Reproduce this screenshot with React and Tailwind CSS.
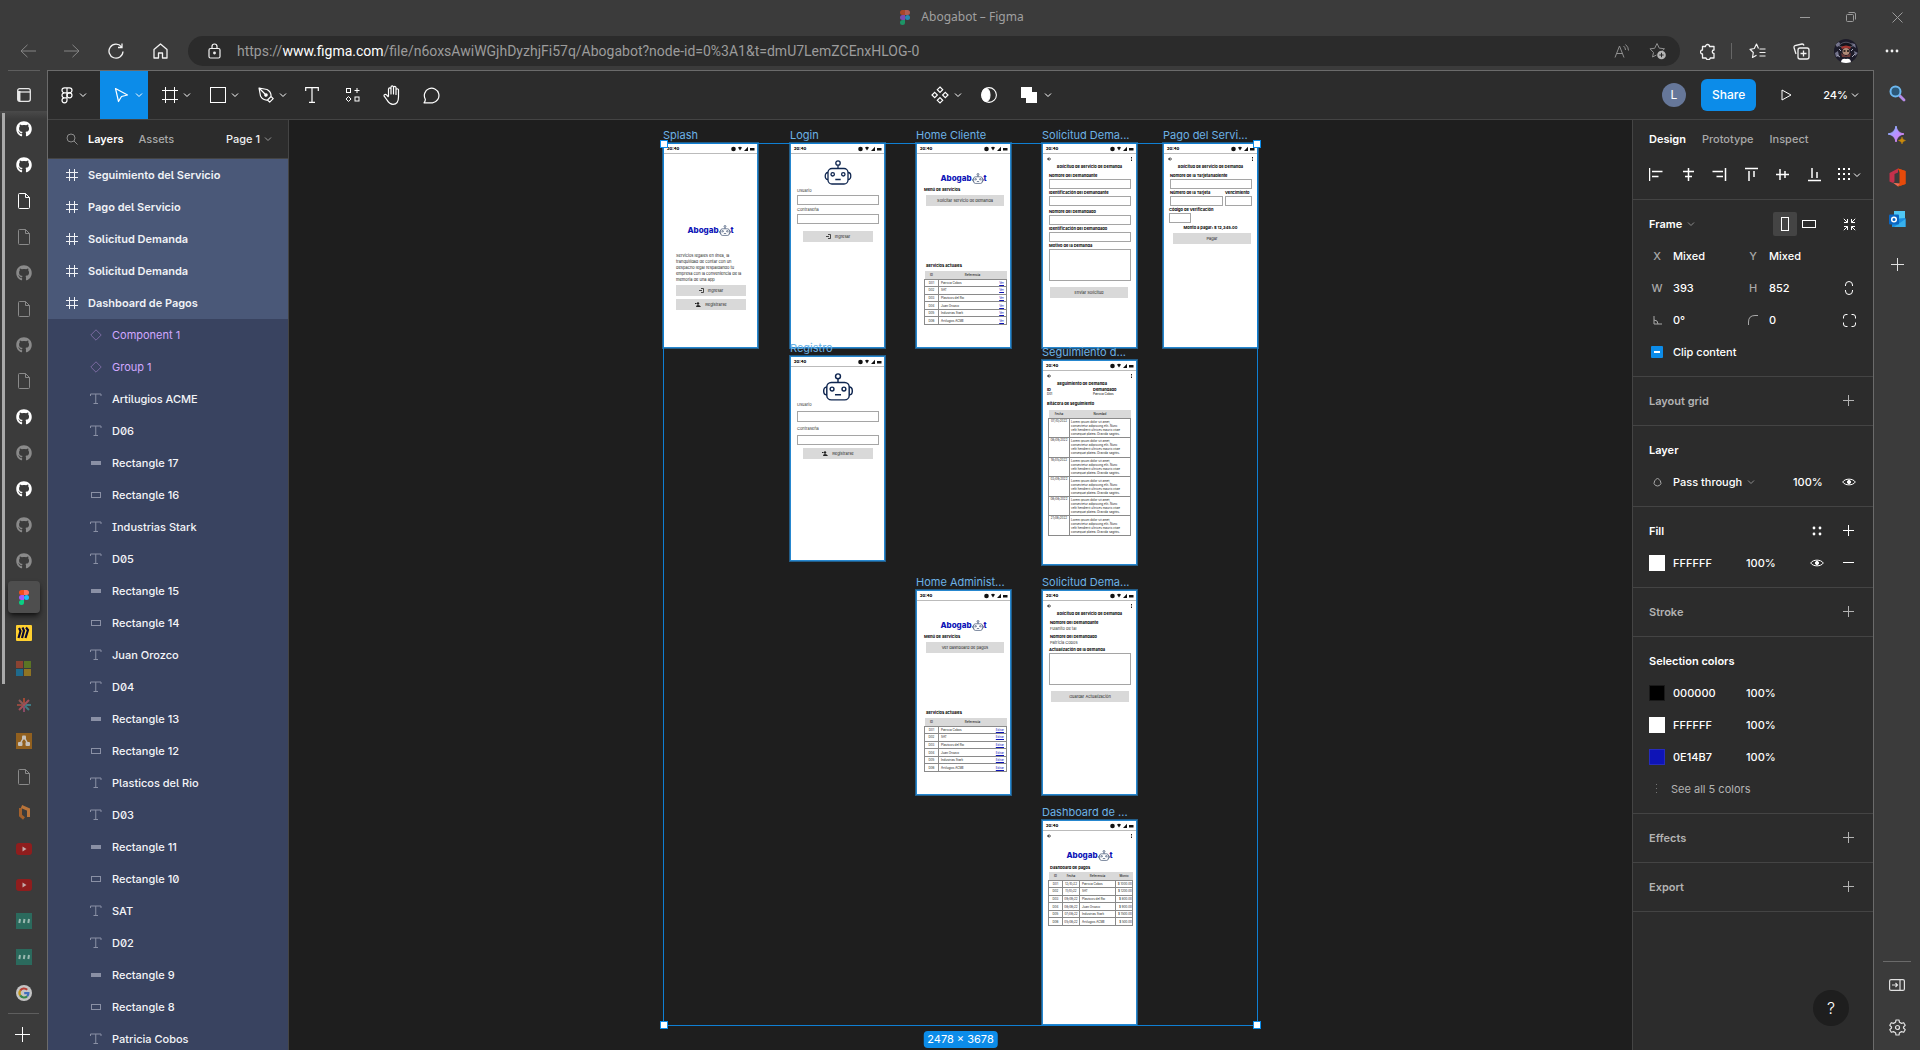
import React from "react";
import { FaGithub } from "react-icons/fa";

/* ---------- generic icon helpers ---------- */

function Svg({ w = 16, h = 16, sw = 1, className = "", children, fill = "none" }) {
  return (
    <svg width={w} height={h} viewBox={`0 0 ${w} ${h}`} fill={fill} stroke={fill === "none" ? "currentColor" : "none"} strokeWidth={sw} className={`shrink-0 ${className}`} aria-hidden="true">
      {children}
    </svg>
  );
}

const Chevron = ({ className = "" }) => (
  <Svg w={8} h={8} className={className}><path d="M1 2.5 4 5.5 7 2.5" /></Svg>
);
const Plus = ({ className = "" }) => (
  <Svg w={12} h={12} className={className}><path d="M5.5 0V11M0 5.5H11" /></Svg>
);
const FrameIcon = () => (
  <Svg w={12} h={12}><path d="M3.5 0V12M8.5 0V12M0 3.5H12M0 8.5H12" /></Svg>
);
const TextIcon = () => (
  <Svg w={12} h={12}><path d="M.5 3V1H11V3M5.75 1V10.5M3.5 10.5H8" /></Svg>
);
const Eye = () => (
  <Svg w={14} h={8}><path d="M.7 4C3 .2 11 .2 13.3 4 11 7.800 3 7.800 .7 4Z" /><circle cx="7" cy="4" r="1.6" fill="currentColor" /></Svg>
);

function FigmaLogo({ dim }) {
  return (
    <svg width="10" height="15" viewBox="0 0 10 15" className={dim ? "opacity-60" : ""} aria-hidden="true">
      <path d="M2.500 0H5V5H2.500A2.500 2.500 0 0 1 2.500 0Z" fill="#f24e1e" />
      <path d="M5 0H7.500A2.500 2.500 0 0 1 7.500 5H5Z" fill="#ff7262" />
      <path d="M2.500 5H5V10H2.500A2.500 2.500 0 0 1 2.500 5Z" fill="#a259ff" />
      <circle cx="7.500" cy="7.500" r="2.500" fill="#1abcfe" />
      <path d="M2.500 10H5V12.500A2.500 2.500 0 1 1 2.500 10Z" fill="#0acf83" />
    </svg>
  );
}

/* ---------- browser chrome ---------- */

function TitleBar() {
  return (
    <header className="grid h-[34px] shrink-0 grid-cols-[1fr_auto_1fr] items-center">
      <span />
      <div className="flex items-center gap-[11px] pl-1 text-[12px] text-[#a0a0a0] font-['Noto_Sans','Open_Sans',sans-serif]">
        <FigmaLogo dim />
        <span>Abogabot – Figma</span>
      </div>
      <div className="flex justify-end text-[#9b9b9b]">
        <button aria-label="Minimize" className="grid w-[46px] place-items-center"><Svg w={10} h={10}><path d="M0 5.500H10" /></Svg></button>
        <button aria-label="Restore" className="grid w-[46px] place-items-center"><Svg w={10} h={10}><rect x=".5" y="2.500" width="7" height="7" rx="1" /><path d="M2.500 .5H8A1.500 1.500 0 0 1 9.500 2V7.500" /></Svg></button>
        <button aria-label="Close" className="grid w-[46px] place-items-center"><Svg w={11} h={11}><path d="M.5 .5 10.500 10.500M10.500 .5 .5 10.500" /></Svg></button>
      </div>
    </header>
  );
}

const navBtn = "grid w-11 h-[30px] shrink-0 place-items-center";
const wideBtn = "grid w-[46px] h-[30px] shrink-0 place-items-center";

function PirateAvatar() {
  return (
    <svg width="24" height="24" viewBox="0 0 24 24" aria-hidden="true">
      <defs><clipPath id="avatar-clip"><circle cx="12" cy="12" r="12" /></clipPath></defs>
      <g clipPath="url(#avatar-clip)">
        <rect width="24" height="24" fill="#1d1c2a" />
        <path d="M1 5 5 3 7 6 3 8ZM17 4 21 5 22 9 19 7ZM1 14 4 12 5 17 2 18ZM20 12 24 14 21 17Z" fill="#74748c" />
        <path d="M5 7C8 2 16 2 19 7L12 9Z" fill="#14141d" stroke="#8d8da0" strokeWidth=".5" />
        <path d="M7 8Q12 5 17 8L16 10Q12 8 8 10Z" fill="#a33530" />
        <circle cx="12" cy="12.500" r="3.500" fill="#b08a78" />
        <path d="M9.500 12H11.500M13 12H15" stroke="#111" strokeWidth="1.600" />
        <path d="M7 14 12 17 17 14 16 18 8 18Z" fill="#6b3a3a" />
        <path d="M3 16 6 18M21 15 18 18M5 10 7 12M19 10 17 12" stroke="#a6a6b8" />
        <path d="M7 24Q7 19 12 20 17 19 17 24Z" fill="#fff" />
      </g>
    </svg>
  );
}

function AddressBar() {
  return (
    <nav className="mt-[2px] flex h-[34px] shrink-0 items-start pl-[6px] pr-[5px] text-[#f2f2f2]">
      <button aria-label="Back" className={`${navBtn} text-[#858585]`}><Svg w={16} h={14}><path d="M16 7H1M7.500 .8 1 7 7.500 13.200" /></Svg></button>
      <button aria-label="Forward" className={`${navBtn} text-[#858585]`}><Svg w={16} h={14}><path d="M0 7H15M8.500 .8 15 7 8.500 13.200" /></Svg></button>
      <button aria-label="Refresh" className={navBtn}><Svg w={16} h={16} sw={1.3}><path d="M15 8.500A7 7 0 1 1 13.500 3.800M14 .5V4.500H10" /></Svg></button>
      <button aria-label="Home" className={navBtn}><Svg w={15} h={16} sw={1.3}><path d="M1 6.500 7.500 1 14 6.500V15H9.500V10H5.500V15H1Z" strokeLinejoin="round" /></Svg></button>
      <div className="ml-[6px] flex h-[30px] flex-1 items-center rounded-full bg-[#2b2b2b] pl-5 pr-1">
        <Svg w={13} h={16} sw={1.2}><rect x="1" y="5.500" width="11" height="9.500" rx="1.500" /><path d="M4 5.500V3.500A2.500 2.500 0 0 1 9 3.500V5.500" /><circle cx="6.500" cy="10" r=".8" fill="currentColor" /></Svg>
        <div role="textbox" aria-label="Address" className="ml-4 flex-1 whitespace-nowrap text-[14px] text-[#9c9c9c] font-['Roboto','Noto_Sans',sans-serif]">
          https://<span className="text-white">www.figma.com</span>/file/n6oxsAwiWGjhDyzhjFi57q/Abogabot?node-id=0%3A1&amp;t=dmU7LemZCEnxHLOG-0
        </div>
        <button aria-label="Read aloud" className="grid w-9 place-items-center text-[#8f8f8f]"><Svg w={17} h={16}><path d="M1 14.500 5.500 3 10 14.500M2.700 10.500H8.400M9.500 3Q11.500 4.500 11.500 7M11.500 1.500Q14.500 4 14.500 7.500" /></Svg></button>
        <button aria-label="Add to favorites" className="grid w-9 place-items-center text-[#8f8f8f]">
          <Svg w={18} h={18}><path d="M12 6.300 15.500 6.800 13.500 8.500M7.500 13 3.500 15 4.500 10.500 1 6.800 5.700 6.300 8 1.500 10.300 6.200 12 6.300" strokeLinejoin="round" /><circle cx="12.500" cy="13" r="4.300" fill="#b5b5b5" stroke="none" /><path d="M12.500 10.800V15.200M10.300 13H14.700" stroke="#2b2b2b" /></Svg>
        </button>
      </div>
      <button aria-label="Extensions" className="ml-3 grid h-[30px] w-8 shrink-0 place-items-center"><Svg w={16} h={17} sw={1.3}><path d="M2.500 3.500H5.500A2 2 0 1 1 9.500 3.500H14V7A1.600 1.600 0 1 0 14 10.500V15H10.300A2.200 2.200 0 0 1 6 15H2.500V11A2 2 0 1 1 2.500 7Z" strokeLinejoin="round" /></Svg></button>
      <span className="ml-[7px] mt-[7px] h-4 w-px shrink-0 bg-[#666]" />
      <button aria-label="Favorites" className={`${navBtn} ml-[3px]`}><Svg w={17} h={16} sw={1.2}><path d="M9.500 5.500 7.500 1 5.300 5.500 1 6.300 4.300 9.500 3.500 14.500 7.500 12.300M10.500 6H16.500M10.500 9.500H16.500M10.500 13H16.500" strokeLinejoin="round" /></Svg></button>
      <button aria-label="Collections" className={navBtn}><Svg w={17} h={17} sw={1.3}><rect x="5" y="5" width="11" height="11" rx="2" /><path d="M10.500 7.500V13.500M7.500 10.500H13.500M3 11 1 4.500Q.8 3 2 2.500L9 1Q10.500 .8 11 2.500" /></Svg></button>
      <button aria-label="Profile" className={wideBtn}><PirateAvatar /></button>
      <button aria-label="Settings and more" className={wideBtn}><Svg w={14} h={4} fill="currentColor"><circle cx="2" cy="2" r="1.400" /><circle cx="7" cy="2" r="1.400" /><circle cx="12" cy="2" r="1.400" /></Svg></button>
    </nav>
  );
}

/* ---------- vertical tabs ---------- */

const FileTab = ({ dim }) => (
  <Svg w={12} h={16} className={dim ? "text-[#8a8a8a]" : "text-white"}><path d="M1.500 .5H7.500L11.500 4.500V14.500Q11.500 15.500 10.500 15.500H1.500Q.5 15.500 .5 14.500V1.500Q.5 .5 1.500 .5ZM7.500 .5V4.500H11.500" /></Svg>
);
const Gh = ({ dim }) => <FaGithub size={16} className={dim ? "text-[#8a8a8a]" : "text-white"} aria-hidden="true" />;
const Miro = () => (
  <Svg w={16} h={16} fill="#ffd02f"><rect width="16" height="16" rx="1" fill="#ffd02f" /><path d="M3 3 4.500 6 2.500 13M6.500 2.500 8 5.500 6 13M10 2.500 12 5 9.500 13" stroke="#0b0933" strokeWidth="2.200" fill="none" /></Svg>
);
const Windows = () => (
  <Svg w={16} h={16} fill="#000"><path d="M0 0H7V7H0Z" fill="#8b4332" /><path d="M8 0H15V7H8Z" fill="#5b7524" /><path d="M0 8H7V15H0Z" fill="#1f6a8c" /><path d="M8 8H15V15H8Z" fill="#8f7423" /></Svg>
);
const Asterisk = () => (
  <Svg w={16} h={16} sw={2}><path d="M8 1V6" stroke="#a04a35" /><path d="M8 10V15" stroke="#8b4a66" /><path d="M1 8H6" stroke="#93493f" /><path d="M10 8H15" stroke="#3f7a82" /><path d="M3 3 8 8" stroke="#8c5a58" /><path d="M8 8 13 13" stroke="#3f7a82" /><path d="M13 3 3 13" stroke="#a0505a" /></Svg>
);
const Diagram = () => (
  <Svg w={16} h={16} fill="#000"><rect width="16" height="16" fill="#91601f" /><path d="M8 4 4 11M8 4 12 11" stroke="#c4c0ba" strokeWidth="1.500" /><rect x="6" y="2.500" width="4" height="4" rx="1" fill="#c4c0ba" /><rect x="2" y="9" width="4.500" height="4" rx="1" fill="#c4c0ba" /><rect x="9.500" y="9" width="4.500" height="4" rx="1" fill="#c4c0ba" /></Svg>
);
const Hex = () => (
  <Svg w={16} h={16} sw={3}><path d="M4.500 3V10.500L8 13.500" stroke="#a3602b" /><path d="M5.500 1.500 12.500 4.500V12" stroke="#b9743a" /></Svg>
);
const Youtube = () => (
  <Svg w={16} h={12} fill="#8f1d1d"><rect width="16" height="12" rx="3" /><path d="M6.500 3.500 10.500 6 6.500 8.500Z" fill="#c3a9a9" /></Svg>
);
const Teal = () => (
  <Svg w={16} h={16} fill="#2b6a5d"><rect width="16" height="16" /><path d="M4 6 3.300 10M8.500 6 7.800 10M13 6 12.300 10" stroke="#9bb8b0" strokeWidth="2" /></Svg>
);
const Google = () => (
  <Svg w={16} h={16} sw={2.2} className="opacity-70"><circle cx="8" cy="8" r="8" fill="#fff" stroke="none" /><path d="M11.200 4.800A4.500 4.500 0 0 0 4.200 5.600" stroke="#ea4335" /><path d="M4.200 5.600A4.500 4.500 0 0 0 4.200 10.400" stroke="#fbbc05" /><path d="M4.200 10.400A4.500 4.500 0 0 0 11.200 11.200" stroke="#34a853" /><path d="M11.200 11.200Q12.500 10 12.400 8.100H8.200" stroke="#4285f4" /></Svg>
);

const tabs = [
  ["GitHub", <Gh />], ["GitHub", <Gh />], ["Document", <FileTab />], ["Document", <FileTab dim />],
  ["GitHub", <Gh dim />], ["Document", <FileTab dim />], ["GitHub", <Gh dim />], ["Document", <FileTab dim />],
  ["GitHub", <Gh />], ["GitHub", <Gh dim />], ["GitHub", <Gh />], ["GitHub", <Gh dim />], ["GitHub", <Gh dim />],
  ["Figma", <FigmaLogo />, true], ["Miro", <Miro />], ["Microsoft", <Windows />], ["Asterisk", <Asterisk />],
  ["Diagrams", <Diagram />], ["Document", <FileTab dim />], ["Hexagon", <Hex />], ["YouTube", <Youtube />],
  ["YouTube", <Youtube />], ["Notes", <Teal />], ["Notes", <Teal />], ["Google", <Google />],
];

function TabStrip() {
  return (
    <aside className="flex w-[47px] shrink-0 flex-col items-center">
      <span className="h-px w-8 shrink-0 bg-[#5e5e5e]" />
      <button aria-label="Tab actions" className="grid h-10 w-8 shrink-0 place-items-center pt-2 text-[#e8e8e8]">
        <Svg w={14} h={14} sw={1.3}><rect x=".7" y=".7" width="12.600" height="12.600" rx="2" /><path d="M.7 4H13.300" /><path d="M2.200 3V13" strokeWidth="2.500" /></Svg>
      </button>
      <div className="relative flex w-full flex-1 flex-col bg-linear-to-b from-[#4a4a4a] to-[#3b3b3b] to-[8px]">
        <span className="absolute left-[2px] top-[2px] h-[571px] w-[3px] bg-[#a9a9a9]" />
        {tabs.map(([name, icon, active], i) => (
          <button key={i} aria-label={name} className="grid h-9 place-items-center">
            <span className={active ? "grid h-8 w-8 place-items-center rounded bg-[#4e4e4e] shadow-md shadow-black/60" : "grid place-items-center"}>{icon}</span>
          </button>
        ))}
        <span className="mx-2 mt-[2px] h-px bg-[#5e5e5e]" />
        <button aria-label="New tab" className="grid h-10 place-items-center pr-[2px] text-white"><Svg w={15} h={15}><path d="M7.500 0V15M0 7.500H15" /></Svg></button>
      </div>
    </aside>
  );
}

/* ---------- Figma toolbar ---------- */

const tool = "flex h-12 w-12 shrink-0 items-center justify-between pl-[14px] pr-[5px]";
const soloTool = "grid h-12 w-10 shrink-0 place-items-center";

function Toolbar() {
  return (
    <div className="flex h-[49px] shrink-0 items-center border-b border-[#444] text-white">
      <div className="flex flex-1">
        <button aria-label="Main menu" className="flex h-12 w-[52px] items-center gap-[6px] pl-[13px]">
          <Svg w={12} h={17} sw={1.2}><path d="M6 .8H3.500A2.500 2.500 0 0 0 3.500 5.800H6ZM6 .8H8.500A2.500 2.500 0 0 1 8.500 5.800H6ZM6 5.800H3.500A2.500 2.500 0 0 0 3.500 10.800H6ZM3.500 10.800A2.500 2.500 0 1 0 6 13.300V10.800Z" /><circle cx="8.500" cy="8.300" r="2.500" /></Svg>
          <Chevron />
        </button>
        <button aria-label="Move" className={`${tool} bg-[#0c8ce9]`}><Svg w={15} h={16} sw={1.2}><path d="M1.500 1.500 13.500 8 7.500 9.500 4.500 14.500Z" strokeLinejoin="round" /></Svg><Chevron /></button>
        <button aria-label="Frame" className={tool}><Svg><path d="M3.500 0V16M12.500 0V16M0 3.500H16M0 12.500H16" /></Svg><Chevron /></button>
        <button aria-label="Rectangle" className={tool}><Svg><rect x=".5" y=".5" width="15" height="15" /></Svg><Chevron /></button>
        <button aria-label="Pen" className={tool}><Svg sw={1.2}><path d="M1 1 9 2.500Q13.500 5 13 9.500L9.500 13Q5 13.500 2.500 9ZM1 1 7 7M13 9.500 15.200 11.700 11.700 15.200 9.500 13" strokeLinejoin="round" /><circle cx="8" cy="8" r="1.200" fill="currentColor" /></Svg><Chevron /></button>
        <button aria-label="Text" className={soloTool}><Svg w={14} h={16} sw={1.2}><path d="M.7 4V.7H13.300V4M7 .7V15.300M4 15.300H10" /></Svg></button>
        <button aria-label="Resources" className={soloTool}><Svg><rect x="2.500" y="1.500" width="4" height="4" /><path d="M13 1V6M10.500 3.500H15.500M4.500 9.500 7 12 4.500 14.500 2 12Z" /><rect x="11" y="10" width="4" height="4" /></Svg></button>
        <button aria-label="Hand tool" className={soloTool}><Svg w={18} h={20} sw={1.2}><path d="M5.500 11.500V4.200a1.250 1.250 0 0 1 2.500 0V9V2.200a1.250 1.250 0 0 1 2.500 0V9V2.700a1.250 1.250 0 0 1 2.500 0V9.500V5a1.250 1.250 0 0 1 2.500 0V12C15.500 17 13.500 19.300 10 19.300 6.500 19.300 5.500 17.500 4 15L1 10.800C.8 9.500 2.500 8.800 3.500 9.800L5.500 12" strokeLinejoin="round" /></Svg></button>
        <button aria-label="Comment" className={soloTool}><Svg w={18} h={17} sw={1.2}><path d="M1 15.800Q2.500 14 2.300 12.200A7.300 7.300 0 1 1 9.500 15.800Z" strokeLinejoin="round" /></Svg></button>
      </div>
      <div className="flex pl-[70px]">
        <button aria-label="Create component" className="flex h-12 w-12 items-center gap-[5px] pl-[10px]"><Svg w={18} h={18} sw={1.2}><path d="M9 1 11.700 3.700 9 6.400 6.300 3.700ZM3.700 6.300 6.400 9 3.700 11.700 1 9ZM14.300 6.300 17 9 14.300 11.700 11.600 9ZM9 11.600 11.700 14.300 9 17 6.300 14.300Z" /></Svg><Chevron /></button>
        <button aria-label="Use as mask" className={soloTool}><Svg sw={1.1}><circle cx="8" cy="8" r="7.400" /><ellipse cx="5" cy="8" rx="4" ry="6.500" fill="currentColor" /></Svg></button>
        <button aria-label="Union selection" className="flex h-12 w-12 items-center justify-between pl-3 pr-[5px]"><Svg fill="currentColor"><path d="M0 0H11V5H16V16H5V11H0Z" /></Svg><Chevron /></button>
      </div>
      <div className="flex flex-1 items-center justify-end pr-[14px] text-[12px] font-medium">
        <span className="grid h-6 w-6 place-items-center rounded-full bg-[#667799] font-normal">L</span>
        <button className="ml-[15px] h-8 rounded-md bg-[#0c8ce9] px-[11px]">Share</button>
        <button aria-label="Present" className="ml-[25px] mr-[31px] grid w-[11px] place-items-center"><Svg w={11} h={12}><path d="M1 1 10 6 1 11Z" strokeLinejoin="round" /></Svg></button>
        <button className="flex items-center gap-[3px] text-[11px]">24% <Chevron /></button>
      </div>
    </div>
  );
}

/* ---------- layers panel ---------- */

const frames = ["Seguimiento del Servicio", "Pago del Servicio", "Solicitud Demanda", "Solicitud Demanda", "Dashboard de Pagos"];
const layers = [
  ["comp", "Component 1"], ["comp", "Group 1"],
  ["text", "Artilugios ACME"], ["text", "D06"], ["bar", "Rectangle 17"], ["rect", "Rectangle 16"],
  ["text", "Industrias Stark"], ["text", "D05"], ["bar", "Rectangle 15"], ["rect", "Rectangle 14"],
  ["text", "Juan Orozco"], ["text", "D04"], ["bar", "Rectangle 13"], ["rect", "Rectangle 12"],
  ["text", "Plasticos del Rio"], ["text", "D03"], ["bar", "Rectangle 11"], ["rect", "Rectangle 10"],
  ["text", "SAT"], ["text", "D02"], ["bar", "Rectangle 9"], ["rect", "Rectangle 8"], ["text", "Patricia Cobos"],
];
const layerIcons = {
  comp: <Svg w={12} h={12}><path d="M6 .8 11.200 6 6 11.200 .8 6Z" /></Svg>,
  text: <TextIcon />,
  bar: <Svg w={12} h={12} fill="currentColor"><rect x="1" y="4" width="10" height="4" /></Svg>,
  rect: <Svg w={12} h={12}><rect x="1.500" y="3.500" width="9" height="5" /></Svg>,
};

function LayersPanel() {
  return (
    <aside className="flex w-[241px] shrink-0 flex-col overflow-hidden border-r border-[#444]">
      <div className="flex h-[39px] shrink-0 items-center border-b border-[#444] pl-[18px]">
        <button aria-label="Search" className="text-[#8c8c8c]"><Svg w={12} h={12}><circle cx="5" cy="5" r="4" /><path d="M8 8 11.500 11.500" /></Svg></button>
        <button className="ml-[10px] font-semibold text-white">Layers</button>
        <button className="ml-[15px] font-medium text-[#a9a9a9]">Assets</button>
        <button className="ml-auto mr-4 flex items-center gap-1 font-medium text-[#f0f0f0]">Page 1 <Chevron className="text-[#9a9a9a]" /></button>
      </div>
      <ul className="font-['Inter',sans-serif] [font-feature-settings:'ss02']">
        {frames.map((name, i) => (
          <li key={i} className="bg-[#4a5878]">
            <button className="flex h-8 w-full items-center gap-[10px] pl-[18px] font-semibold text-[#f0f2f6]"><FrameIcon />{name}</button>
          </li>
        ))}
        {layers.map(([kind, name]) => (
          <li key={name} className="bg-[#394360]">
            <button className={kind === "comp" ? "flex h-8 w-full items-center gap-[10px] pl-[42px] text-[#d1a8ff]" : "flex h-8 w-full items-center gap-[10px] pl-[42px] font-medium text-[#f4f5f8]"}>
              <span className={kind === "comp" ? "text-[#7a6aa0]" : "text-[#8a90a5]"}>{layerIcons[kind]}</span>
              {name}
            </button>
          </li>
        ))}
      </ul>
    </aside>
  );
}

/* ---------- artboard pieces ---------- */

function Robot({ w, h }) {
  return (
    <svg width={w} height={h} viewBox="0 0 28 25" fill="none" stroke="#0f2650" strokeWidth="1.300" className="shrink-0" aria-hidden="true">
      <circle cx="14" cy="3" r="2.200" /><path d="M14 5.200V8.500M11.300 19.500H16.700M4 12.500C.3 12.500 .3 19.500 4 19.500M24 12.500C27.700 12.500 27.700 19.500 24 19.500" />
      <rect x="4" y="8.500" width="20" height="15.500" rx="4" /><circle cx="8.700" cy="14.300" r="1.700" /><circle cx="19.300" cy="14.300" r="1.700" />
    </svg>
  );
}
const Logo = ({ className }) => (
  <div className={`flex h-[10px] items-center justify-center text-[8px] leading-[10px] font-extrabold text-[#0e14b7] ${className}`}>
    Abogab<Robot w={12} h={11} />t
  </div>
);
const StatusBar = () => (
  <div className="flex h-[11px] shrink-0 items-center justify-between border-b border-[#bbb] pl-1 pr-[3px] pt-px text-[4px] font-extrabold">
    20:40
    <Svg w={24} h={6} fill="#111"><circle cx="2.500" cy="3" r="2.300" /><path d="M7 1.500Q9 0 11 1.500L9 4.500ZM13 5 17 .8V5ZM19 2H23.500V4.500H19Z" /></Svg>
  </div>
);
const BackRow = () => (
  <div className="mt-[3px] flex h-1 items-center justify-between pl-[5px] pr-[5px]">
    <Svg w={4} h={4} sw={0.8}><path d="M4 2H.6M2.200 .4 .6 2 2.200 3.600" /></Svg>
    <Svg w={1} h={4} fill="#222"><path d="M0 0H1V1H0ZM0 1.500H1V2.500H0ZM0 3H1V4H0Z" /></Svg>
  </div>
);
const Heading = ({ className = "", children }) => <p className={`h-1 whitespace-nowrap text-[4px] leading-[4px] font-bold ${className}`}>{children}</p>;
const Note = ({ className = "", children }) => <p className={`h-1 whitespace-nowrap text-[4px] leading-[4px] text-[#333] ${className}`}>{children}</p>;

function Field({ label, light, className = "", box = "mt-px h-[10px]", area }) {
  const El = area ? "textarea" : "input";
  return (
    <label className={`flex flex-col ${className}`}>
      <span className={light ? "h-1 whitespace-nowrap text-[4px] leading-[4px] text-[#333]" : "h-1 whitespace-nowrap text-[4px] leading-[4px] font-bold"}>{label}</span>
      <El className={`block w-full resize-none border border-[#a5a5a5] bg-white ${box}`} />
    </label>
  );
}
const MiniButton = ({ className = "", children }) => (
  <button className={`flex h-[11px] shrink-0 items-center justify-center gap-1 bg-[#d9d9d9] text-[4px] leading-[4px] text-[#222] ${className}`}>{children}</button>
);
const EnterIcon = () => <Svg w={5} h={5} sw={0.8}><path d="M2 .5H4.500V4.500H2M0 2.500H3" /></Svg>;
const RegisterIcon = () => <Svg w={6} h={5} fill="#222"><circle cx="3" cy="1.500" r="1.200" /><path d="M1 5Q1 3 3 3T6 5ZM0 1H1.500V2H0Z" /></Svg>;

const people = ["Patricia Cobos", "SAT", "Plasticos del Rio", "Juan Orozco", "Industrias Stark", "Artilugios ACME"];
const tableCls = "table-fixed border-collapse text-[3px] leading-[4px] text-[#222]";
const th = "h-2 bg-[#d9d9d9] p-0 font-medium";
const td = "border border-[#8a8a8a] p-0";

function ServicesTable({ action }) {
  return (
    <table className={`${tableCls} ml-2 mt-[3px] h-[54px] w-[83px]`}>
      <thead><tr><th className={`${th} w-[14px]`}>ID</th><th className={th}>Referencia</th></tr></thead>
      <tbody>
        {people.map((p, i) => (
          <tr key={p}>
            <td className={`${td} text-center`}>D0{i + 1}</td>
            <td className={td}><div className="flex justify-between px-[2px]">{p}<a href="#" className="text-[#0e14b7] underline">{action}</a></div></td>
          </tr>
        ))}
      </tbody>
    </table>
  );
}

function HomeScreen({ button, action }) {
  return (
    <>
      <Logo className="mt-[19px]" />
      <Heading className="ml-2 mt-[5px]">Menú de Servicios</Heading>
      <MiniButton className="ml-[10px] mt-[3px] w-[78px]">{button}</MiniButton>
      <Heading className="ml-[10px] mt-[58px]">Servicios actuales</Heading>
      <ServicesTable action={action} />
    </>
  );
}

const Splash = () => (
  <>
    <Logo className="mt-[71px]" />
    <p className="ml-[13px] mt-[18px] whitespace-nowrap text-[4px] leading-[6px] text-[#222]">
      Servicios legales en linea, la<br />tranquilidad de contar con un<br />despacho legal respaldando tu<br />empresa con la conveniencia de la<br />memoria de una app
    </p>
    <MiniButton className="ml-[13px] mt-[2px] w-[70px]"><EnterIcon />Ingresar</MiniButton>
    <MiniButton className="ml-[13px] mt-[3px] w-[70px]"><RegisterIcon />Registrarse</MiniButton>
  </>
);
const Login = () => (
  <>
    <div className="mt-[6px] flex justify-center"><Robot w={28} h={25} /></div>
    <Field light label="Usuario" className="ml-[7px] mt-1 w-[82px]" box="mt-[2px] h-[10px]" />
    <Field light label="Contraseña" className="ml-[7px] mt-[3px] w-[82px]" box="mt-[2px] h-[10px]" />
    <MiniButton className="ml-[13px] mt-[7px] w-[70px]"><EnterIcon />Ingresar</MiniButton>
  </>
);
const Registro = () => (
  <>
    <div className="mt-[6px] flex justify-center"><Robot w={32} h={28} /></div>
    <Field light label="Usuario" className="ml-[7px] mt-[2px] w-[82px]" box="mt-1 h-[11px]" />
    <Field light label="Contraseña" className="ml-[7px] mt-[5px] w-[82px]" box="mt-1 h-[10px]" />
    <MiniButton className="ml-[13px] mt-[3px] w-[70px]"><RegisterIcon />Registrarse</MiniButton>
  </>
);
const Solicitud = () => (
  <>
    <BackRow />
    <Heading className="mt-1 text-center">Solicitud de Servicio de Demanda</Heading>
    <Field label="Nombre del Demandante" className="ml-[7px] mt-[5px] w-[82px]" />
    <Field label="Identificación del Demandante" className="ml-[7px] mt-[2px] w-[82px]" />
    <Field label="Nombre del Demandado" className="ml-[7px] mt-1 w-[82px]" />
    <Field label="Identificación del Demandado" className="ml-[7px] mt-[2px] w-[82px]" />
    <Field area label="Motivo de la Demanda" className="ml-[7px] mt-[2px] w-[82px]" box="mt-px h-8" />
    <MiniButton className="ml-2 mt-[6px] w-[78px]">Enviar Solicitud</MiniButton>
  </>
);
const Pago = () => (
  <>
    <BackRow />
    <Heading className="mt-1 text-center">Solicitud de Servicio de Demanda</Heading>
    <Field label="Nombre de la Tarjetahabiente" className="ml-[7px] mt-[5px] w-[82px]" />
    <div className="ml-[7px] mt-[2px] flex gap-[2px]">
      <Field label="Número de la Tarjeta" className="w-[53px]" />
      <Field label="Vencimiento" className="w-[27px]" />
    </div>
    <Field label="Código de Verificación" className="ml-[6px] mt-[2px] w-[22px]" />
    <Heading className="mt-[3px] text-center">Monto a pagar: $ 12,345.00</Heading>
    <MiniButton className="ml-[10px] mt-[3px] w-[78px]">Pagar</MiniButton>
  </>
);

const dates = ["07/10/2022", "08/09/2022", "18/05/2022", "03/09/2022", "08/08/2022", "21/08/2022"];
const Seguimiento = () => (
  <>
    <BackRow />
    <Heading className="ml-[15px] mt-1">Seguimiento de Demanda</Heading>
    <div className="ml-[5px] mt-[2px] grid grid-cols-[46px_1fr]">
      <Heading>ID</Heading><Heading>Demandado</Heading>
      <p className="text-[3px] leading-[4px]">D01</p><p className="text-[3px] leading-[4px]">Patricia Cobos</p>
    </div>
    <Heading className="ml-[5px] mt-[6px]">Bitácora de seguimiento</Heading>
    <table className={`${tableCls} ml-[6px] mt-1 h-[126px] w-[83px]`}>
      <thead><tr><th className={`${th} w-[21px]`}>Fecha</th><th className={th}>Novedad</th></tr></thead>
      <tbody>
        {dates.map((d) => (
          <tr key={d}>
            <td className={`${td} text-center align-top`}>{d}</td>
            <td className={td}><div className="whitespace-nowrap pl-px">Lorem ipsum dolor sit amet,<br />consectetur adipiscing elit. Nunc<br />velit hendrerit ultrices mauris vitae<br />consequat platea. Gravida sagittis.</div></td>
          </tr>
        ))}
      </tbody>
    </table>
  </>
);
const Actualizacion = () => (
  <>
    <BackRow />
    <Heading className="mt-1 text-center">Solicitud de Servicio de Demanda</Heading>
    <Heading className="ml-2 mt-[5px]">Nombre del Demandante</Heading>
    <Note className="ml-2 mt-[2px]">Fulanito de tal</Note>
    <Heading className="ml-2 mt-1">Nombre del Demandado</Heading>
    <Note className="ml-2 mt-[2px]">Patricia Cobos</Note>
    <Field area label="Actualización de la demanda" className="ml-[7px] mt-[3px] w-[82px]" box="mt-px h-8" />
    <MiniButton className="ml-[9px] mt-[6px] w-[78px]">Guardar Actualización</MiniButton>
  </>
);
const payments = [
  ["12/10/22", "$ 1000.00"], ["11/10/22", "$ 1200.00"], ["09/09/22", "$ 800.00"],
  ["08/08/22", "$ 900.00"], ["07/08/22", "$ 1500.00"], ["05/08/22", "$ 500.00"],
];
const Dashboard = () => (
  <>
    <BackRow />
    <Logo className="mt-3" />
    <Heading className="ml-2 mt-[6px]">Dashboard de pagos</Heading>
    <table className={`${tableCls} ml-[6px] mt-[2px] h-[54px] w-[85px]`}>
      <thead><tr><th className={`${th} w-[14px]`}>ID</th><th className={`${th} w-[17px]`}>Fecha</th><th className={th}>Referencia</th><th className={`${th} w-[17px]`}>Monto</th></tr></thead>
      <tbody>
        {people.map((p, i) => (
          <tr key={p}>
            <td className={`${td} text-center`}>D0{i + 1}</td>
            <td className={`${td} text-center`}>{payments[i][0]}</td>
            <td className={td}><div className="pl-[2px]">{p}</div></td>
            <td className={`${td} whitespace-nowrap text-right`}>{payments[i][1]}</td>
          </tr>
        ))}
      </tbody>
    </table>
  </>
);

/* Positions are canvas coordinates of each artboard. */
const artboards = [
  { name: "Splash", x: 374, y: 23, body: <Splash /> },
  { name: "Login", x: 501, y: 23, body: <Login /> },
  { name: "Home Cliente", x: 627, y: 23, body: <HomeScreen button="Solicitar servicio de demanda" action="Ver" /> },
  { name: "Solicitud Dema...", x: 753, y: 23, body: <Solicitud /> },
  { name: "Pago del Servi...", x: 874, y: 23, body: <Pago /> },
  { name: "Registro", x: 501, y: 236, body: <Registro /> },
  { name: "Seguimiento d...", x: 753, y: 240, body: <Seguimiento /> },
  { name: "Home Administ...", x: 627, y: 470, body: <HomeScreen button="Ver dashboard de pagos" action="Editar" /> },
  { name: "Solicitud Dema...", x: 753, y: 470, body: <Actualizacion /> },
  { name: "Dashboard de ...", x: 753, y: 700, body: <Dashboard /> },
];

const handle = "absolute h-2 w-2 border border-[#0c8ce9] bg-white";

function Canvas() {
  return (
    <main className="relative min-w-0 flex-1 overflow-hidden bg-[#1e1e1e]">
      {artboards.map(({ name, x, y, body }, i) => (
        <section key={i} className="absolute" style={{ left: x, top: y }}>
          <h2 className="absolute bottom-full left-0 h-4 whitespace-nowrap text-[11px] leading-[16px] text-[#6cb2e6]">{name}</h2>
          <div className="flex h-[205px] w-[95px] flex-col overflow-hidden bg-white text-black ring-1 ring-[#2687cf]/60 outline-1 -outline-offset-1 outline-[#2687cf]">
            <StatusBar />
            {body}
          </div>
        </section>
      ))}
      <div className="pointer-events-none absolute left-[374px] top-[23px] h-[883px] w-[595px] border border-[#0f7fd3]">
        <span className={`${handle} -left-1 -top-1`} />
        <span className={`${handle} -right-1 -top-1`} />
        <span className={`${handle} -bottom-1 -left-1`} />
        <span className={`${handle} -bottom-1 -right-1`} />
        <span className="absolute left-1/2 top-full mt-[6px] -translate-x-1/2 whitespace-nowrap rounded-sm bg-[#0c8ce9] px-1 text-[11px] leading-[17px] text-white">2478 × 3678</span>
      </div>
    </main>
  );
}

/* ---------- design panel ---------- */

const section = "flex flex-col border-b border-[#444] py-2 pl-4 pr-4";
const row = "flex h-8 items-center";
const field = "w-14 bg-transparent text-white outline-none";

function Prop({ label, icon, value }) {
  return (
    <label className="flex w-24 items-center">
      <span className="mr-2 grid w-4 place-items-center text-[#a8a8a8]">{icon || label}</span>
      <input aria-label={label} className={field} defaultValue={value} />
    </label>
  );
}
const EndIcon = ({ label, className = "", children }) => (
  <button aria-label={label} className={`grid h-8 w-4 shrink-0 place-items-center ${className}`}>{children}</button>
);
const Collapsed = ({ title }) => (
  <section className={section}>
    <div className={`${row} justify-between text-[#b3b3b3]`}><h3 className="font-semibold">{title}</h3><EndIcon label={`Add ${title}`}><Plus /></EndIcon></div>
  </section>
);
function ColorRow({ hex, swatch, children }) {
  return (
    <div className={row}>
      <button aria-label={`Color ${hex}`} className={`mr-2 h-4 w-4 shrink-0 ${swatch}`} />
      <input aria-label="Hex" className="w-[73px] bg-transparent outline-none" defaultValue={hex} />
      <input aria-label="Opacity" className="w-10 bg-transparent outline-none" defaultValue="100%" />
      {children}
    </div>
  );
}

const aligns = [
  ["Align left", "M.5 1V14M3 4.500H13.500M3 9.500H9.500"],
  ["Align horizontal centers", "M7.500 1V14M2 4.500H13M4 9.500H11"],
  ["Align right", "M13.500 1V14M.5 4.500H11M4.500 9.500H11"],
  ["Align top", "M1 1.500H14M5 4V14M10 4V10"],
  ["Align vertical centers", "M1 7.500H14M5 2V13M10 4V11"],
  ["Align bottom", "M1 13.500H14M5 1V11M10 5V11"],
];

function DesignPanel() {
  return (
    <aside className="relative w-[241px] shrink-0 border-l border-[#444] bg-[#2c2c2c] font-medium text-white">
      <div className="flex h-[38px] items-center gap-4 pl-4">
        <button className="font-semibold">Design</button>
        <button className="text-[#a9a9a9]">Prototype</button>
        <button className="text-[#a9a9a9]">Inspect</button>
      </div>
      <div className="flex h-[42px] items-center justify-between border-b border-[#444] pb-2 pl-4 pr-3">
        {aligns.map(([name, d]) => (
          <button key={name} aria-label={name}><Svg w={15} h={15} sw={1.500}><path d={d} /></Svg></button>
        ))}
        <button aria-label="Tidy up" className="flex items-center gap-[2px]">
          <Svg w={13} h={13} fill="currentColor"><path d="M0 0H2V2H0ZM5 0H7V2H5ZM10 0H12V2H10ZM0 5H2V7H0ZM5 5H7V7H5ZM10 5H12V7H10ZM0 10H2V12H0ZM5 10H7V12H5ZM10 10H12V12H10Z" /></Svg>
          <Chevron />
        </button>
      </div>
      <section className={section}>
        <div className={row}>
          <button className="flex items-center gap-[5px] font-semibold">Frame <Chevron className="text-[#8c8c8c]" /></button>
          <button aria-label="Portrait" className="ml-auto grid h-6 w-6 place-items-center rounded-[2px] bg-[#444]"><Svg w={8} h={14}><rect x=".5" y=".5" width="7" height="13" /></Svg></button>
          <button aria-label="Landscape" className="mr-5 grid h-6 w-6 place-items-center"><Svg w={14} h={8}><rect x=".5" y=".5" width="13" height="7" /></Svg></button>
          <EndIcon label="Resize to fit"><Svg w={13} h={13}><path d="M4.500 1V4.500H1M.8 .8 4.500 4.500M8.500 1V4.500H12M12.200 .8 8.500 4.500M4.500 12V8.500H1M.8 12.200 4.500 8.500M8.500 12V8.500H12M12.200 12.200 8.500 8.500" /></Svg></EndIcon>
        </div>
        <div className={row}><Prop label="X" value="Mixed" /><Prop label="Y" value="Mixed" /></div>
        <div className={row}>
          <Prop label="W" value="393" /><Prop label="H" value="852" />
          <EndIcon label="Constrain proportions" className="ml-auto"><Svg w={8} h={14}><path d="M.5 5V4A3.500 3.500 0 0 1 7.500 4V5M.5 9V10A3.500 3.500 0 0 0 7.500 10V9" /></Svg></EndIcon>
        </div>
        <div className={row}>
          <Prop label="Rotation" icon={<Svg w={9} h={9}><path d="M1 0V8H9M1 4Q5 4 5 8" /></Svg>} value="0°" />
          <Prop label="Corner radius" icon={<Svg w={10} h={10}><path d="M.5 10V7Q.5 .5 7 .5H10" /></Svg>} value="0" />
          <EndIcon label="Independent corners" className="ml-auto"><Svg w={13} h={13}><path d="M.5 4.500V3Q.5 .5 3 .5H4.500M8.500 .5H10Q12.500 .5 12.500 3V4.500M12.500 8.500V10Q12.500 12.500 10 12.500H8.500M4.500 12.500H3Q.5 12.500 .5 10V8.500" /></Svg></EndIcon>
        </div>
        <label className={`${row} pl-[2px]`}>
          <span className="relative mr-[10px] grid h-3 w-3 place-items-center">
            <input type="checkbox" defaultChecked className="h-3 w-3 appearance-none rounded-[1px] bg-[#0c8ce9]" />
            <span className="pointer-events-none absolute left-[3px] top-[5px] h-[2px] w-[6px] bg-white" />
          </span>
          Clip content
        </label>
      </section>
      <Collapsed title="Layout grid" />
      <section className={section}>
        <div className={row}><h3 className="font-semibold">Layer</h3></div>
        <div className={row}>
          <span className="mr-2 grid w-4 place-items-center text-[#a8a8a8]"><Svg w={9} h={10}><path d="M4.500 1Q8.500 4 8 6.500 7 9 4.500 9T1 6.500Q.5 4 4.500 1Z" /></Svg></span>
          <button className="flex items-center gap-[5px]">Pass through <Chevron className="text-[#8c8c8c]" /></button>
          <input aria-label="Layer opacity" className="ml-auto w-12 bg-transparent outline-none" defaultValue="100%" />
          <EndIcon label="Toggle layer visibility"><Eye /></EndIcon>
        </div>
      </section>
      <section className={section}>
        <div className={row}>
          <h3 className="font-semibold">Fill</h3>
          <EndIcon label="Styles" className="ml-auto mr-4"><Svg w={10} h={10} fill="currentColor"><circle cx="2" cy="2" r="1.400" /><circle cx="8" cy="2" r="1.400" /><circle cx="2" cy="8" r="1.400" /><circle cx="8" cy="8" r="1.400" /></Svg></EndIcon>
          <EndIcon label="Add fill"><Plus /></EndIcon>
        </div>
        <ColorRow hex="FFFFFF" swatch="bg-white">
          <EndIcon label="Toggle fill visibility" className="ml-auto mr-4"><Eye /></EndIcon>
          <EndIcon label="Remove fill"><Svg w={12} h={12}><path d="M0 5.500H11" /></Svg></EndIcon>
        </ColorRow>
      </section>
      <Collapsed title="Stroke" />
      <section className={section}>
        <div className={row}><h3 className="font-semibold">Selection colors</h3></div>
        <ColorRow hex="000000" swatch="border border-[#1a1a1a] bg-black" />
        <ColorRow hex="FFFFFF" swatch="bg-white" />
        <ColorRow hex="0E14B7" swatch="border border-[#262bbe] bg-[#0e14b7]" />
        <button className={`${row} font-normal text-[#b3b3b3]`}>
          <span className="mr-[6px] grid w-4 place-items-center"><Svg w={2} h={10} fill="#777"><path d="M0 0H1V1H0ZM0 4H1V5H0ZM0 8H1V9H0Z" /></Svg></span>
          See all 5 colors
        </button>
      </section>
      <Collapsed title="Effects" />
      <Collapsed title="Export" />
      <button aria-label="Help" className="absolute bottom-6 right-6 grid h-9 w-9 place-items-center rounded-full bg-[#1e1e1e] text-[16px] font-light">?</button>
    </aside>
  );
}

/* ---------- Edge sidebar ---------- */

function EdgeSidebar() {
  return (
    <aside className="flex w-[46px] shrink-0 flex-col items-center pt-[2px] text-[#e0e0e0]">
      <button aria-label="Search" className="grid h-[42px] place-items-center"><Svg w={17} h={17}><path d="M11 11 15 15" stroke="#b78be8" strokeWidth="2.800" strokeLinecap="round" /><circle cx="6.500" cy="6.500" r="5" fill="#2c5878" stroke="#6cb8f0" strokeWidth="2" /></Svg></button>
      <button aria-label="Discover" className="grid h-[42px] place-items-center">
        <svg width="18" height="18" viewBox="0 0 18 18" aria-hidden="true">
          <defs><linearGradient id="spark" x1="0" y1="0" x2="1" y2="1"><stop stopColor="#6fc3ff" /><stop offset=".5" stopColor="#b890ff" /><stop offset="1" stopColor="#e07be8" /></linearGradient></defs>
          <path d="M8 0Q9 7 16 8 9 9 8 16 7 9 0 8 7 7 8 0Z" fill="url(#spark)" stroke="url(#spark)" /><path d="M14 11Q14.500 14 17.500 14.500 14.500 15 14 18 13.500 15 10.500 14.500 13.500 14 14 11Z" fill="#c98a0c" stroke="#c98a0c" strokeWidth=".5" />
        </svg>
      </button>
      <button aria-label="Office" className="grid h-[42px] place-items-center"><Svg w={17} h={19} fill="#000"><path d="M.5 5 9 .5V4.500L5.500 6V13.500L4 15 .5 13.500Z" fill="#c4314b" /><path d="M9 .5 16.500 3V16L9 18.500 10.500 16V4Z" fill="#e64a0a" /><path d="M9 .5 11 4V15.500L9 18.500 16.500 16V3Z" fill="#e64a0a" /><path d="M4 14.800 11 15.500 9 18.500Z" fill="#ee6a52" /></Svg></button>
      <button aria-label="Outlook" className="grid h-[42px] place-items-center">
        <Svg w={17} h={17} fill="#000"><rect x="5" width="11" height="9" fill="#50c8f5" /><path d="M3 8 16.500 7V16H3Z" fill="#1a8fe0" /><path d="M16.500 8V16H5Z" fill="#37b1ee" /><rect y="3.500" width="10" height="10" rx="1" fill="#0a66c2" /><circle cx="5" cy="8.500" r="2.300" fill="none" stroke="#fff" strokeWidth="1.500" /></Svg>
      </button>
      <button aria-label="Customize" className="mt-[3px] grid h-[42px] place-items-center"><Svg w={13} h={13}><path d="M6.500 0V13M0 6.500H13" /></Svg></button>
      <span className="mt-auto h-px w-7 bg-[#6a6a6a]" />
      <button aria-label="Hide sidebar" className="grid h-[46px] place-items-center"><Svg w={16} h={12} sw={1.2}><rect x=".6" y=".6" width="14.800" height="10.800" rx="1.500" /><path d="M11 .6V11.400M3 6H8.500M6.500 4 8.500 6 6.500 8" /></Svg></button>
      <button aria-label="Settings" className="mb-1 grid h-[38px] place-items-center"><Svg w={17} h={17} sw={1.2}><path d="M7 1H10L10.500 3.300 12.500 4.400 14.700 3.700 16.200 6.300 14.500 8 14.500 9 16.200 10.700 14.700 13.300 12.500 12.600 10.500 13.700 10 16H7L6.500 13.700 4.500 12.600 2.300 13.300 .8 10.700 2.500 9 2.500 8 .8 6.300 2.300 3.700 4.500 4.400 6.500 3.300Z" strokeLinejoin="round" /><circle cx="8.500" cy="8.500" r="2" /></Svg></button>
    </aside>
  );
}

export default function App() {
  return (
    <div className="flex h-screen flex-col overflow-hidden bg-[#3b3b3b] text-[11px] leading-4 font-['Inter',sans-serif]">
      <TitleBar />
      <AddressBar />
      <div className="flex min-h-0 flex-1">
        <TabStrip />
        <div className="flex min-w-0 flex-1 flex-col border-l border-r border-t border-[#6b6b6b] bg-[#2c2c2c]">
          <Toolbar />
          <div className="flex min-h-0 flex-1">
            <LayersPanel />
            <Canvas />
            <DesignPanel />
          </div>
        </div>
        <EdgeSidebar />
      </div>
    </div>
  );
}
